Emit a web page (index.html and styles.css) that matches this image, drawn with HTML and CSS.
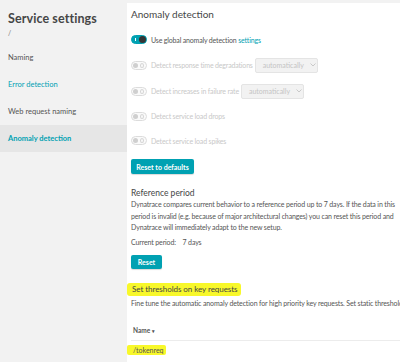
FILE: index.html
```html
<!DOCTYPE html>
<html lang="en">
<head>
    <meta charset="UTF-8">
    <meta name="viewport" content="width=device-width, initial-scale=1.0">
    <title>Service settings</title>
    <link rel="stylesheet" href="styles.css">
</head>
<body>

    <div class="sidebar">
        <h1 class="side-title">Service settings</h1>
        <div class="side-path">/</div>
        <ul class="side-nav">
            <li>Naming</li>
            <li class="link">Error detection</li>
            <li>Web request naming</li>
            <li class="link active">Anomaly detection</li>
        </ul>
    </div>

    <div class="main">
        <h2 class="page-title">Anomaly detection</h2>

        <div class="row first">
            <span class="toggle on"><span class="knob"></span></span>
            <span class="label">Use global anomaly detection <a class="link">settings</a></span>
        </div>
        <div class="row tall disabled">
            <span class="toggle"><span class="knob"></span></span>
            <span class="label">Detect response time degradations</span>
            <span class="select">automatically
                <svg class="chev" width="6" height="4" viewBox="0 0 6 4"><polyline points="0.5,0.5 3,3 5.5,0.5" fill="none" stroke="#c4c4c4" stroke-width="0.9"/></svg>
            </span>
        </div>
        <div class="row tall disabled">
            <span class="toggle"><span class="knob"></span></span>
            <span class="label">Detect increases in failure rate</span>
            <span class="select">automatically
                <svg class="chev" width="6" height="4" viewBox="0 0 6 4"><polyline points="0.5,0.5 3,3 5.5,0.5" fill="none" stroke="#c4c4c4" stroke-width="0.9"/></svg>
            </span>
        </div>
        <div class="row short disabled">
            <span class="toggle"><span class="knob"></span></span>
            <span class="label">Detect service load drops</span>
        </div>
        <div class="row disabled">
            <span class="toggle"><span class="knob"></span></span>
            <span class="label">Detect service load spikes</span>
        </div>

        <button class="btn btn-defaults">Reset to defaults</button>

        <h3 class="section-title ref-title">Reference period</h3>
        <p class="text">Dynatrace compares current behavior to a reference period up to 7 days. If the data in this<br>period is invalid (e.g. because of major architectural changes) you can reset this period and<br>Dynatrace will immediately adapt to the new setup.</p>
        <div class="text current">Current period: <span class="days">7 days</span></div>

        <button class="btn btn-reset">Reset</button>

        <h3 class="section-title key-title"><span class="mark">Set thresholds on key requests</span></h3>
        <div class="text fine">Fine tune the automatic anomaly detection for high priority key requests. Set static thresholds</div>

        <div class="table-head">Name <span class="caret">&#9662;</span></div>
        <div class="table-row"><span class="mark small">/tokenreq</span></div>
    </div>

</body>
</html>
```

FILE: styles.css
```css
body {
    margin: 0;
    display: flex;
    height: 362px;
    overflow: hidden;
    background-color: #f2f2f2;
    font-family: Lato, 'Open Sans', sans-serif;
    color: #454646;
}
.sidebar {
    width: 127px;
    flex-shrink: 0;
}
.side-title {
    margin: 11px 0 0 8px;
    font-size: 12.5px;
    line-height: 16px;
    font-weight: 700;
    letter-spacing: 0.1px;
    color: #454646;
}
.side-path {
    margin: 1px 0 0 8px;
    font-size: 7px;
    line-height: 10px;
    color: #777;
}
.side-nav {
    list-style: none;
    margin: 6px 0 0;
    padding: 0;
}
.side-nav li {
    height: 27px;
    line-height: 27px;
    padding-left: 8px;
    font-size: 7.5px;
    color: #555;
}
.side-nav li.link {
    color: #00a1b2;
}
.side-nav li.active {
    background-color: #e6e6e6;
    font-weight: 700;
}
.main {
    flex: 1;
    margin-top: 3px;
    padding: 4px 0 0 4px;
    background-color: #fff;
    overflow: hidden;
    white-space: nowrap;
}
.page-title {
    margin: 0;
    font-size: 10px;
    line-height: 14px;
    font-weight: 400;
    color: #454646;
}
.section-title {
    margin: 0;
    font-size: 8.5px;
    font-weight: 400;
    color: #454646;
}
.row {
    height: 25px;
    display: flex;
    align-items: center;
    font-size: 7px;
    letter-spacing: -0.17px;
    color: #555;
}
.row.first {
    margin-top: 6px;
}
.row.tall {
    height: 26px;
}
.row.short {
    height: 24px;
}
.row.disabled {
    color: #c8c8c8;
}
.label {
    margin-left: 4px;
}
.link {
    color: #00a1b2;
}
.toggle {
    position: relative;
    flex-shrink: 0;
    width: 16px;
    height: 9px;
    box-sizing: border-box;
    border: 1px solid #dcdcdc;
    border-radius: 5px;
    background-color: #fafafa;
}
.toggle .knob {
    position: absolute;
    left: 1px;
    top: 1px;
    width: 5px;
    height: 5px;
    border-radius: 50%;
    background-color: #cfcfcf;
}
.toggle::after {
    content: "";
    position: absolute;
    right: 2px;
    top: 1px;
    width: 2px;
    height: 3px;
    border: 1px solid #d4d4d4;
    border-radius: 50%;
}
.toggle.on {
    border-color: #00a1b2;
    background-color: #00a1b2;
}
.toggle.on .knob {
    left: auto;
    right: 0;
    top: 0;
    width: 7px;
    height: 7px;
    background-color: #353535;
}
.toggle.on::after {
    right: auto;
    left: 3px;
    top: 2px;
    width: 1px;
    height: 3px;
    border: 0;
    border-radius: 0;
    background-color: #fff;
}
.select {
    display: flex;
    align-items: center;
    flex-shrink: 0;
    margin-left: 2px;
    width: 63px;
    height: 15px;
    box-sizing: border-box;
    padding-left: 7px;
    border: 1px solid #e4e4e4;
    border-radius: 2px;
    background-color: #f2f2f2;
    color: #c4c4c4;
    letter-spacing: 0;
}
.chev {
    margin-left: 6px;
}
.btn {
    display: block;
    height: 15px;
    padding: 0;
    border: none;
    border-radius: 2px;
    background-color: #00a1b2;
    box-shadow: 0 1px 1px rgba(0,0,0,0.15);
    color: #fff;
    font-family: Lato, 'Open Sans', sans-serif;
    font-size: 7px;
    font-weight: 700;
}
.btn-defaults {
    width: 63px;
    margin-top: 6px;
}
.btn-reset {
    width: 31px;
    height: 14px;
    margin-top: 7px;
}
.ref-title {
    margin-top: 13px;
    line-height: 12px;
}
.text {
    font-size: 7px;
    letter-spacing: -0.13px;
    color: #555;
}
p.text {
    margin: 0;
    line-height: 11.5px;
}
.current {
    margin-top: 2px;
    line-height: 12px;
}
.days {
    margin-left: 5px;
}
.key-title {
    margin-top: 14px;
    margin-left: -4px;
    font-size: 8px;
    line-height: 13px;
    letter-spacing: -0.05px;
}
.mark {
    display: inline-block;
    padding: 0 3px 0 5px;
    border-radius: 3px;
    background-color: #f8f82a;
}
.fine {
    margin-top: 1px;
    line-height: 12px;
}
.table-head {
    margin-top: 16px;
    padding: 0 0 3px 2px;
    border-bottom: 1px solid #ececec;
    font-size: 6.5px;
    line-height: 12px;
    font-weight: 700;
    color: #555;
}
.caret {
    font-size: 5px;
}
.table-row {
    margin: 4px 0 0 -4px;
    font-size: 7px;
    line-height: 10px;
    color: #555;
}
.mark.small {
    padding: 0 2px 0 6px;
    border-radius: 2px;
}
```
